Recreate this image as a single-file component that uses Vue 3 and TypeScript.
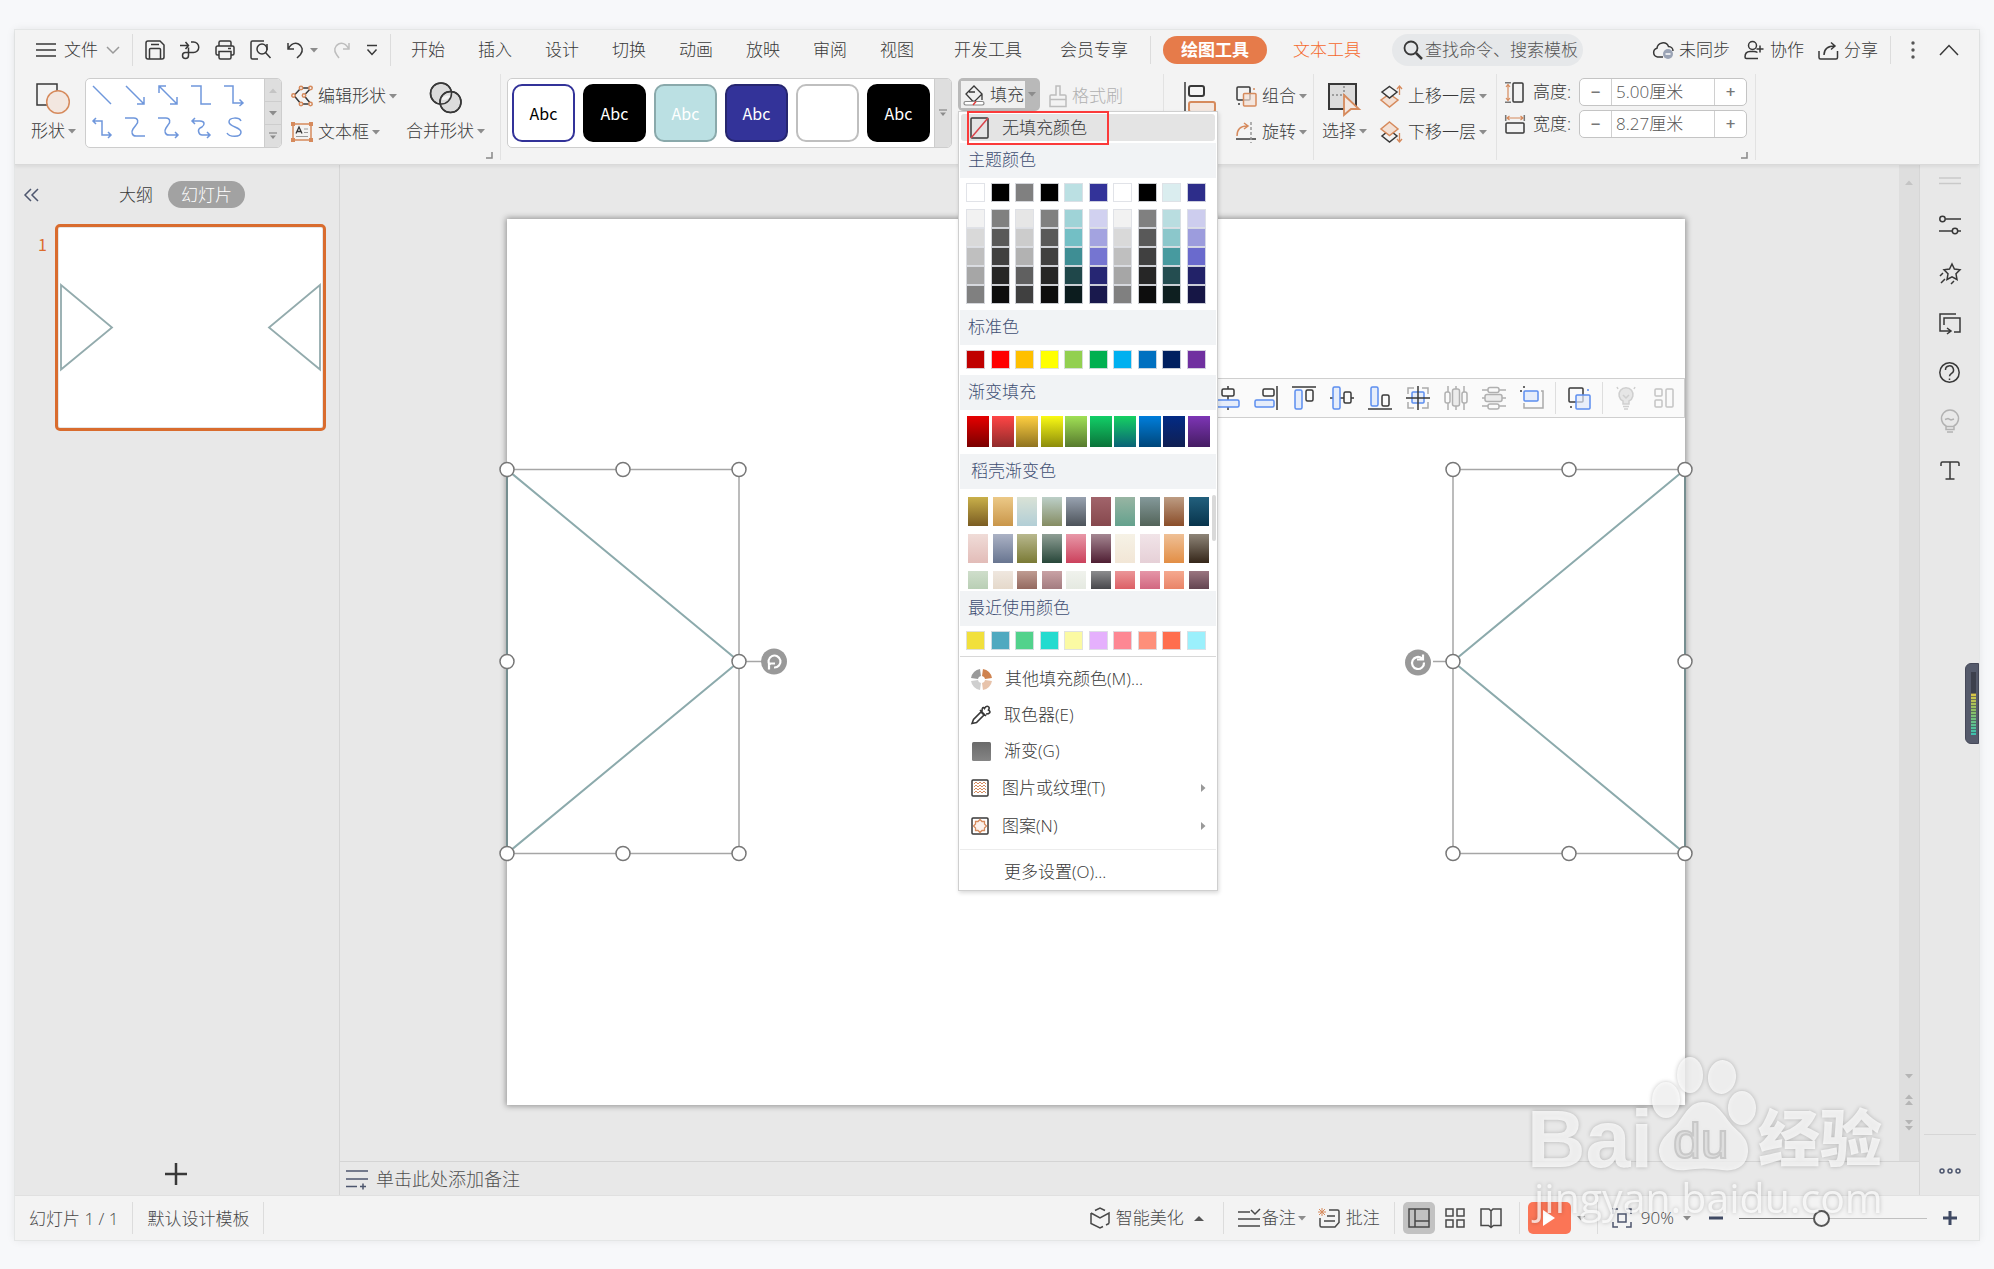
<script setup lang="ts">
import { h, ref } from 'vue'

type Icon = [number, number, string]

const O = '#d68a5c'
const B = '#5b8def'

const icons: Record<string, Icon> = {
  menu: [20, 14, '<path d="M0 1h20M0 7h20M0 13h20"/>'],
  chevron: [14, 8, '<path d="M1 1l6 6 6-6" stroke="#999"/>'],
  caret: [8, 5, '<path d="M0 0h8L4 4.5z" fill="#8c8c8c" stroke="none"/>'],
  caretUp: [10, 5, '<path d="M0 5h10L5 0z" fill="#555" stroke="none"/>'],
  caretLight: [8, 5, '<path d="M0 5h8L4 .5z" fill="#c4c4c4" stroke="none"/>'],
  caretMore: [8, 8, '<path d="M0 1h8" stroke="#999"/><path d="M1 3.500h6L4 7z" fill="#8c8c8c" stroke="none"/>'],
  save: [20, 20, '<path d="M1 3a2 2 0 0 1 2-2h12l4 4v12a2 2 0 0 1-2 2H3a2 2 0 0 1-2-2zM4.500 19V9.500a1 1 0 0 1 1-1h9a1 1 0 0 1 1 1V19M6 4.500h8"/>'],
  output: [20, 20, '<path d="M0 5.500h8M5.500 2l3 3.500-3 3.500M11 2h2.500a5 5 0 0 1 0 10.500H5.500a3 3 0 1 0 3 3V7.500"/>'],
  print: [20, 20, '<path d="M4 6V2.500A1.500 1.500 0 0 1 5.500 1h9A1.500 1.500 0 0 1 16 2.500V6M4 15H2.500A1.500 1.500 0 0 1 1 13.500v-6A1.500 1.500 0 0 1 2.500 6h15A1.500 1.500 0 0 1 19 7.500v6a1.500 1.500 0 0 1-1.500 1.500H16M4 11.500h12v6a1.500 1.500 0 0 1-1.500 1.500h-9A1.500 1.500 0 0 1 4 17.500zM13 8.500h3"/>'],
  preview: [21, 20, '<path d="M14 1H2.500A1.500 1.500 0 0 0 1 2.500v15A1.500 1.500 0 0 0 2.500 19H8"/><circle cx="12" cy="9" r="5"/><path d="M15.500 12.500L20.500 18M17 4v6"/>'],
  undo: [18, 18, '<path d="M2 2v6h6M2 8C5 3 9 1.500 12.500 3c4 2 5 7 2 10.500L11 17"/>'],
  redo: [18, 18, '<path d="M16 2v6h-6M16 8C13 3 9 1.500 5.500 3c-4 2-5 7-2 10.500L6 17" stroke="#bdbdbd"/>'],
  more: [12, 12, '<path d="M1 1.500h10M1.500 5.500L6 10.500l4.500-5"/>'],
  search: [20, 20, '<circle cx="8" cy="8" r="6.500" stroke-width="1.800"/><path d="M13 13l6 6" stroke-width="2.500"/>'],
  cloud: [22, 18, '<path d="M11 16H5.500A4.500 4.500 0 0 1 5 7.200 6 6 0 0 1 16.500 5.500a4.500 4.500 0 0 1 4.500 4.500"/><circle cx="16" cy="13" r="5" fill="#9aa3b5" stroke="none"/><path d="M13.500 13h5" stroke="#fff"/>'],
  people: [20, 20, '<circle cx="8.500" cy="5.500" r="4"/><path d="M14 18.500H2.500A1.500 1.500 0 0 1 1 17c0-4 2-5.500 5-5.500h4c1.500 0 2.500.3 3.500 1M12.500 9h7M16 5.500v7"/>'],
  share: [21, 19, '<path d="M1 10v6.500A1.500 1.500 0 0 0 2.500 18h15.500a1.500 1.500 0 0 0 1.500-1.500V10M6 14c0-6 4-9 11-9M13 1.500L17 5l-4 3.500"/>'],
  dots: [4, 18, '<g fill="#555" stroke="none"><circle cx="2" cy="2" r="1.700"/><circle cx="2" cy="9" r="1.700"/><circle cx="2" cy="16" r="1.700"/></g>'],
  up: [20, 12, '<path d="M1 11l9-9.500 9 9.500"/>'],
  shapes: [35, 32, `<path d="M1 2h20v21H1z"/><circle cx="22" cy="20" r="11.300" fill="#f3e7e0" stroke="${O}"/>`],
  merge: [32, 32, '<circle cx="11" cy="11.500" r="10.500" fill="#dcdcdc"/><circle cx="20.500" cy="20" r="10.500" fill="#dcdcdc"/><path d="M10.300 17.600A10.500 10.500 0 0 1 21.300 13.800A10.500 10.500 0 0 1 10.300 17.600z" fill="#f3f3f3" stroke="none"/><circle cx="11" cy="11.500" r="10.500"/><circle cx="20.500" cy="20" r="10.500"/>'],
  editShape: [22, 22, `<path d="M10 3h10l-7 7.500 7 8.500H10L3 10.500z"/><g fill="#f3f3f3" stroke="${O}"><circle cx="10" cy="3" r="1.700"/><circle cx="19.500" cy="3" r="1.700"/><circle cx="2.500" cy="10.500" r="1.700"/><circle cx="13" cy="10.500" r="1.700"/><circle cx="10" cy="19" r="1.700"/><circle cx="19.500" cy="19" r="1.700"/></g>`],
  textBox: [22, 20, `<path d="M2 2h18v16H2z" stroke="${O}"/><g fill="${O}" stroke="none"><path d="M0 0h4v4H0zM18 0h4v4h-4zM0 16h4v4H0zM18 16h4v4h-4z"/></g><path d="M5 11.500L8 5l3 6.500M6 9.500h4" stroke-width="1.300"/><path d="M13 7h4M13 10.500h4M5 14.500h12" stroke="#999" stroke-width="1"/>`],
  ln1: [20, 20, '<path d="M1 1l18 18"/>'],
  ln2: [20, 20, '<path d="M1 1l18 18M19 12v7h-7"/>'],
  ln3: [20, 20, '<path d="M1 1l18 18M19 12v7h-7M1 8V1h7"/>'],
  ln4: [20, 20, '<path d="M0 1h10v18h10"/>'],
  ln5: [20, 20, '<path d="M0 1h9v17h10M15.500 14.500l3.500 3.500-3.500 3"/>'],
  ln6: [20, 20, '<path d="M1 4h9v14h9M4 1L1 4l3 3M16 15l3 3-3 3"/>'],
  ln7: [20, 20, '<path d="M0 1h9c4 0 5 4 2 7l-3 4c-2 3-1 7 3 7h9"/>'],
  ln8: [22, 20, '<path d="M0 1h8c4 0 5 4 2 7l-2 3c-2 3-1 7 3 7h9M17 15l3 3-3 3"/>'],
  ln9: [20, 20, '<path d="M1 4h8c5 0 5 4 2 6l-2 1c-3 2-1 7 2 7h8M4 1L1 4l3 3M16 15l3 3-3 3"/>'],
  ln10: [20, 20, '<path d="M17 4c-2-4-12-4-12 1 0 5 12 5 12 10 0 6-12 5-14 1"/>'],
  bucket: [23, 22, '<path d="M3 10l8-8 8 8-7 7-2 .500zM6 8h6M19 10v6" stroke-width="1.300"/><rect x="1" y="17.500" width="20" height="3.500" rx="1.700" stroke="#888" fill="#fff" stroke-width="1.200"/><path d="M10 21l3-3.500" stroke="#e03c3c"/>'],
  brush: [18, 23, '<path d="M7 1h4v9h5a1 1 0 0 1 1 1v10.500H1V11a1 1 0 0 1 1-1h5zM1 14.500h16" stroke="#bdbdbd"/>'],
  alignL: [32, 30, `<path d="M1 0v30"/><rect x="5" y="4" width="15" height="10" rx="2" stroke-width="2"/><rect x="5" y="20" width="26" height="10" rx="2" fill="#f3e7e0" stroke="${O}" stroke-width="2"/>`],
  group: [21, 21, `<rect x="1" y="1" width="13" height="13" rx="1"/><rect x="7.500" y="7.500" width="12.500" height="12.500" rx="1" fill="#f3e0d4" stroke="${O}" fill-opacity=".7"/><path d="M17 3h2" stroke="${O}"/><path d="M2 18h2"/>`],
  rotate: [21, 21, `<path d="M1 14C1 8 4 4 11 4M8 1l4 3-4 3" stroke="${O}"/><path d="M0 17h20"/><path d="M15 0v21" stroke="#999" stroke-dasharray="3 2"/>`],
  select: [33, 34, `<rect x="1" y="2" width="27" height="25" fill="#dcdcdc" stroke-width="2"/><path d="M4 13h11M16 4v9" stroke="#888" stroke-dasharray="2 2"/><path d="M16 13l15 14h-8l-7 6z" fill="#f3e7e0" stroke="${O}" stroke-width="1.800"/>`],
  fwd: [23, 23, `<path d="M9.500 9l8.500 6-8.500 7L1 15z" fill="#f3e0d4" stroke="${O}"/><path d="M9.500 1.500L17 7l-7.500 6L2 7z" fill="#f3f3f3"/><path d="M19.500 10V1M17 4l2.500-3L22 4" stroke="${O}" stroke-width="1.300"/>`],
  back: [23, 23, `<path d="M9.500 9l7.500 6-7.500 6L2 15z"/><path d="M9.500 1l8.500 7-8.500 6.500L1 8z" fill="#f3e0d4" stroke="${O}"/><path d="M19.500 12v9M17 18l2.500 3 2.500-3" stroke="${O}" stroke-width="1.300"/>`],
  height: [20, 21, `<rect x="8" y="1" width="10" height="19" rx="1"/><path d="M0 .700h6M0 20.300h6" stroke="#777"/><path d="M3 2.500v16M1 5l2-2.500L5 5M1 16l2 2.500L5 16" stroke="${O}" stroke-width="1.200"/>`],
  width: [20, 20, `<rect x="1" y="9" width="18" height="10" rx="1"/><path d="M.7 1v6M19.300 1v6" stroke="#777"/><path d="M2 4h16M4.500 2L2 4l2.500 2M15.500 2L18 4l-2.500 2" stroke="${O}" stroke-width="1.200"/>`],
  launcher: [7, 7, '<path d="M6 0v6H0" stroke="#888"/>'],
  noFill: [20, 22, '<rect x="1" y="1" width="17" height="20" rx="1"/><path d="M1 21L18 1" stroke="#d9434a"/>'],
  wheel: [21, 21, '<g fill="none" stroke-width="7"><path d="M3.500 9.500A7 7 0 0 1 9.500 3.500" stroke="#9a9a9a"/><path d="M11.500 3.500a7 7 0 0 1 6 6" stroke="#cf8350"/><path d="M17.500 11.500a7 7 0 0 1-6 6" stroke="#e7c3ab"/><path d="M9.500 17.500a7 7 0 0 1-6-6" stroke="#cfcfcf"/></g>'],
  dropper: [20, 20, '<path d="M1 18.500l1.500-4L10 7l3 3-7.500 7.500zM9 5l6 6M11 6.500c0-4 1-5 2.500-3C15 0 20 1 17.500 5c3 2 1 4-2.500 4" stroke-width="1.600"/>'],
  gradient: [20, 20, '<defs><linearGradient id="gg" x1="0" y1="0" x2="0" y2="1"><stop offset="0" stop-color="#6a6a6a"/><stop offset="1" stop-color="#858585"/></linearGradient></defs><rect x="1" y="1" width="19" height="19" rx="1.500" fill="url(#gg)" stroke="none"/>'],
  texture: [18, 18, `<rect x="1" y="1" width="16" height="16" rx="1"/><path d="M3 5l2-2 2 2 2-2 2 2 2-2 2 2M3 8l2-2 2 2 2-2 2 2 2-2 2 2M3 11l2-2 2 2 2-2 2 2 2-2 2 2M3 14l2-2 2 2 2-2 2 2 2-2 2 2" stroke="${O}" stroke-width="1"/>`],
  pattern: [18, 18, `<rect x="1" y="1" width="16" height="16" rx="1"/><path d="M9 2.500l2 2h2.500V7l2 2-2 2v2.500H11l-2 2-2-2H4.500V11l-2-2 2-2V4.500H7z" stroke="${O}" fill="#fbf1ec" stroke-width="1.300"/>`],
  arrowR: [5, 8, '<path d="M0 0v8l4.500-4z" fill="#999" stroke="none"/>'],
  collapse: [15, 14, '<path d="M7 1L1 7l6 6M14 1L8 7l6 6" stroke="#4d566e"/>'],
  plus: [22, 22, '<path d="M11 0v22M0 11h22" stroke-width="2.500"/>'],
  notes: [22, 18, '<path d="M0 1h22M0 9h22M0 16.500h11M14 16.500h6M17 13.500v6" stroke="#4d566e"/>'],
  sliders: [22, 20, '<circle cx="3.500" cy="4" r="2.700"/><circle cx="16" cy="16" r="2.700"/><path d="M6.500 4H22M0 16h13M19 16h3"/>'],
  star: [22, 22, '<path d="M13 1l2.400 5 5.600.8-4 4 1 5.700-5-2.700-5 2.700 1-5.700-4-4L10.500 6zM1 13l3-3M2 20l4-4M12 21l3-3"/>'],
  frames: [22, 21, '<path d="M17 1H1v17h10M8 15l4 3-4 3M5 12V5h16v14h-6"/>'],
  help: [21, 21, '<circle cx="10.500" cy="10.500" r="9.700"/><path d="M6.500 8a4 4 0 1 1 6 3.300c-1.500 1-2 1.500-2 3M10.500 16.500v1.500"/>'],
  bulb: [20, 23, '<g stroke="#b2b2b2"><path d="M6 16a8.500 8.500 0 1 1 8 0v3.500H6zM5 9.500l3-1 3 1.500 3-1M6 16.500h8M7 22h6"/></g>'],
  tee: [20, 19, '<path d="M1 5V2.500A1.500 1.500 0 0 1 2.500 1h15A1.500 1.500 0 0 1 19 2.500V5M10 1v17M5.500 18h9"/>'],
  handle: [22, 8, '<path d="M0 1h22M0 6.500h22" stroke="#c9c9c9"/>'],
  ellipsis: [22, 6, '<g stroke="#4d566e"><circle cx="3" cy="3" r="2"/><circle cx="11" cy="3" r="2"/><circle cx="19" cy="3" r="2"/></g>'],
  box: [20, 22, '<path d="M1 6v10.500L10 21l3-1.500M1 6l9 5 9-5v10.500M5 3.500L10 1l5 2.500M19 16.500L16 18" />'],
  noteList: [22, 18, '<path d="M0 3h12M0 10h22M0 17h22M13 1l4 4 5-5"/>'],
  comment: [22, 20, `<path d="M11 2h8.500A1.500 1.500 0 0 1 21 3.500v11L17 19H3.500A1.500 1.500 0 0 1 2 17.500V10M9 8h8M6 13h11"/><path d="M4 0v8M0 4h8M1 1l6 6M7 1L1 7" stroke="${O}" stroke-width="1"/>`],
  normal: [22, 20, '<path d="M1 1h20v18H1zM7 1v18M7 13h14"/>'],
  grid4: [20, 20, '<rect x="1" y="1" width="7" height="7"/><rect x="12" y="1" width="7" height="7"/><rect x="1" y="12" width="7" height="7"/><rect x="12" y="12" width="7" height="7"/>'],
  book: [22, 20, '<path d="M11 19.500l-2.500-2H1V1h8l2 2 2-2h8v16.500h-7.500zM11 3v16"/>'],
  play: [14, 18, '<path d="M1 1v16l12-8z" fill="#fff" stroke="none"/>'],
  fit: [20, 20, '<path d="M1 6V1h5M14 1h5v5M19 14v5h-5M6 19H1v-5M6 6h8v8H6z" stroke="#4d566e"/>'],
  minusB: [14, 4, '<path d="M0 2h14" stroke="#3f4963" stroke-width="3"/>'],
  plusB: [14, 14, '<path d="M0 7h14M7 0v14" stroke="#3f4963" stroke-width="3"/>'],
  dblUp: [8, 11, '<path d="M0 5h8L4 .5zM0 11h8L4 6.500z" fill="#b5b5b5" stroke="none"/>'],
  dblDown: [8, 11, '<path d="M0 0h8L4 4.500zM0 6h8L4 10.500z" fill="#b5b5b5" stroke="none"/>'],
  down: [8, 5, '<path d="M0 0h8L4 4.500z" fill="#b5b5b5" stroke="none"/>'],
  aCenterH: [24, 24, `<path d="M12 0v24"/><rect x="6" y="3" width="12" height="7" rx="1.500" fill="#fafafa"/><rect x="1" y="14" width="22" height="7" rx="1.500" fill="#e6edfa" stroke="${B}"/>`],
  aRight: [24, 24, `<path d="M23 0v24"/><rect x="9" y="3" width="11" height="7" rx="1.500"/><rect x="1" y="14" width="19" height="7" rx="1.500" fill="#e6edfa" stroke="${B}"/>`],
  aTop: [24, 24, `<path d="M0 1h24"/><rect x="3" y="4" width="7" height="19" rx="1.500" fill="#e6edfa" stroke="${B}"/><rect x="14" y="4" width="7" height="11" rx="1.500"/>`],
  aMid: [24, 24, `<path d="M0 12h24"/><rect x="3" y="1" width="7" height="22" rx="1.500" fill="#e6edfa" stroke="${B}"/><rect x="14" y="6" width="7" height="11" rx="1.500" fill="#fafafa"/>`],
  aBottom: [24, 24, `<path d="M0 23h24"/><rect x="3" y="1" width="7" height="19" rx="1.500" fill="#e6edfa" stroke="${B}"/><rect x="14" y="9" width="7" height="11" rx="1.500"/>`],
  aCenter: [24, 24, `<path d="M2 8V2h6M16 2h6v6M22 16v6h-6M8 22H2v-6" stroke="#aaa"/><rect x="6" y="6" width="12" height="11" rx="1" fill="#e6edfa" stroke="${B}"/><path d="M12 0v24M0 12h24"/>`],
  distH: [24, 24, '<g stroke="#b0b0b0"><path d="M4 0v24M12 0v24M20 0v24"/><rect x="1" y="6" width="5" height="11" rx="2" fill="#fafafa"/><rect x="8.500" y="3" width="7" height="17" rx="2" fill="#ececec"/><rect x="18" y="6" width="5" height="11" rx="2" fill="#fafafa"/></g>'],
  distV: [24, 24, '<g stroke="#b0b0b0"><path d="M0 4h24M0 12h24M0 20h24"/><rect x="6" y="1.500" width="11" height="5" rx="2" fill="#fafafa"/><rect x="3" y="8.500" width="17" height="7" rx="2" fill="#ececec"/><rect x="6" y="18" width="11" height="5" rx="2" fill="#fafafa"/></g>'],
  canvas: [24, 24, `<path d="M21 5h2v17H4v-5" stroke="#aaa"/><rect x="4" y="5" width="14" height="10" rx="1" fill="#e6edfa" stroke="${B}"/><path d="M0 5h2M4 0v2"/>`],
  groupBlue: [24, 24, `<rect x="2" y="2" width="14" height="14" rx="1"/><rect x="9" y="9" width="14" height="14" rx="1" fill="#dfe8fa" stroke="${B}" fill-opacity=".7"/><path d="M3 21h2"/><path d="M20 4h2" stroke="${B}"/>`],
  lamp: [24, 24, '<g stroke="#cfcfcf"><path d="M9 18v-3a7 7 0 1 1 6 0v3z" fill="#e6e6e6"/><path d="M9 20.500h6M10 23h4M9 9l3 3 3-3M4 3L3 1M20 3l1-2"/></g>'],
  layout: [24, 24, '<g stroke="#c4c4c4"><rect x="3" y="3" width="7" height="7" rx="1"/><rect x="3" y="14" width="7" height="7" rx="1"/><rect x="14" y="3" width="7" height="18" rx="1"/></g>'],
}

const Ico = (props: { name: string }) => {
  const [w, ht, body] = icons[props.name]
  return h('svg', {
    class: 'ico', width: w, height: ht, viewBox: `0 0 ${w} ${ht}`, fill: 'none',
    stroke: 'currentColor', 'stroke-width': 1.5, 'aria-hidden': 'true', innerHTML: body,
  })
}
Ico.props = ['name']

const tabs = ['开始', '插入', '设计', '切换', '动画', '放映', '审阅', '视图']
const wideTabs = ['开发工具', '会员专享']
const lines = ['ln1', 'ln2', 'ln3', 'ln4', 'ln5', 'ln6', 'ln7', 'ln8', 'ln9', 'ln10']
const presets = [
  { bg: '#fff', line: '#333399', text: '#000', label: 'Abc' },
  { bg: '#000', line: '#000', text: '#fff', label: 'Abc' },
  { bg: '#bbe0e3', line: '#8aa9ab', text: '#fff', label: 'Abc' },
  { bg: '#333399', line: '#26266f', text: '#fff', label: 'Abc' },
  { bg: '#fff', line: '#bfbfbf', text: '#fff', label: '' },
  { bg: '#000', line: '#000', text: '#fff', label: 'Abc' },
]

const theme = ['#ffffff', '#000000', '#808080', '#000000', '#bbe0e3', '#333399', '#ffffff', '#000000', '#daedef', '#2d2d8a']
const tints = [
  ['#f2f2f2', '#808080', '#e6e6e6', '#808080', '#9fd3d7', '#d1d1f0', '#f2f2f2', '#808080', '#b9dde0', '#cdcdee'],
  ['#d9d9d9', '#595959', '#cccccc', '#595959', '#73bfc5', '#a3a3e0', '#d9d9d9', '#595959', '#8bc7cb', '#9c9cdd'],
  ['#bfbfbf', '#404040', '#b2b2b2', '#404040', '#3e8e94', '#7575d1', '#bfbfbf', '#404040', '#479a9f', '#6a6acd'],
  ['#a6a6a6', '#262626', '#606060', '#262626', '#1f474a', '#262673', '#a6a6a6', '#262626', '#244d50', '#222268'],
  ['#808080', '#0d0d0d', '#404040', '#0d0d0d', '#0c1c1e', '#19194d', '#808080', '#0d0d0d', '#0e1f20', '#161645'],
]
const standard = ['#c00000', '#ff0000', '#ffc000', '#ffff00', '#92d050', '#00b050', '#00b0f0', '#0070c0', '#002060', '#7030a0']
const gradients = [
  ['#e60000', '#7a0000'], ['#ff4545', '#8f2b2b'], ['#ffcf40', '#8f7320'], ['#fafa14', '#8c8c0c'], ['#a0e055', '#577a2e'],
  ['#12cf67', '#0a733a'], ['#16d162', '#0a6277'], ['#007edb', '#00467a'], ['#032b85', '#101f52'], ['#7d35b5', '#451c63'],
]
const docer = [
  [['#c9b04a', '#7a5c22'], ['#ecc987', '#c9964a'], ['#d9e2d6', '#b2ced6'], ['#bccfc8', '#858c62'], ['#98a2b0', '#4d535a'],
    ['#a1646b', '#86484d'], ['#98b5a3', '#64a18d'], ['#84999a', '#536459'], ['#bd9c83', '#8a4d29'], ['#22607d', '#08344c']],
  [['#f0dcd8', '#e2bcb8'], ['#abb2c5', '#687590'], ['#b8b88e', '#7a7a35'], ['#8f9f95', '#28473a'], ['#e898a8', '#cb415c'],
    ['#a58792', '#4f1e33'], ['#f6f2e6', '#f2e6d6'], ['#f1e4e8', '#e6d0d7'], ['#efc096', '#e28e45'], ['#8e8578', '#352619']],
  [['#cfdecb', '#b9cfb5'], ['#efe7df', '#e5d9cb'], ['#bf9c92', '#946a60'], ['#c9a2a5', '#a37c80'], ['#f0f2ed', '#e5e9e1'],
    ['#8c8c8e', '#48484c'], ['#eb9698', '#dc6066'], ['#e596a8', '#d26780'], ['#f5a98f', '#e98468'], ['#9a7580', '#634551']],
]
const recent = ['#f1e03c', '#50a9c0', '#52d28c', '#23dbcf', '#fbfaa3', '#e5b0fd', '#fd8793', '#fe8f7a', '#ff6e4e', '#9bf0fc']

const commands = [
  { icon: 'wheel', text: '其他填充颜色(M)...', sub: false },
  { icon: 'dropper', text: '取色器(E)', sub: false },
  { icon: 'gradient', text: '渐变(G)', sub: false },
  { icon: 'texture', text: '图片或纹理(T)', sub: true },
  { icon: 'pattern', text: '图案(N)', sub: true },
]
const floatA = ['aCenterH', 'aRight', 'aTop', 'aMid', 'aBottom', 'aCenter', 'distH', 'distV', 'canvas']
const side = ['sliders', 'star', 'frames', 'help', 'bulb', 'tee']

const grad = (c: string[]) => ({ backgroundImage: `linear-gradient(${c[0]}, ${c[1]})` })
const handlesLeft = [[0, 250], [116, 250], [232, 250], [0, 442], [232, 442], [0, 634], [116, 634], [232, 634]]
const handlesRight = handlesLeft.map(([x, y]) => [x + 946, y])

const shapeHeight = ref('5.00厘米')
const shapeWidth = ref('8.27厘米')
const zoom = ref(43)
</script>

<template>
  <div class="desktop">
    <div class="app">
      <header class="top">
        <div class="menubar">
          <button class="btn file"><Ico name="menu" />文件<Ico name="chevron" /></button>
          <i class="sep" />
          <div class="quick">
            <button class="btn" aria-label="保存"><Ico name="save" /></button>
            <button class="btn" aria-label="输出"><Ico name="output" /></button>
            <button class="btn" aria-label="打印"><Ico name="print" /></button>
            <button class="btn" aria-label="预览"><Ico name="preview" /></button>
            <button class="btn g6" aria-label="撤销"><Ico name="undo" /><Ico name="caret" /></button>
            <button class="btn" aria-label="恢复"><Ico name="redo" /></button>
            <button class="btn" aria-label="更多"><Ico name="more" /></button>
          </div>
          <i class="sep" />
          <nav class="tabs">
            <button v-for="t in tabs" :key="t" class="btn">{{ t }}</button>
          </nav>
          <nav class="tabs wide">
            <button v-for="t in wideTabs" :key="t" class="btn">{{ t }}</button>
          </nav>
          <i class="sep short" />
          <button class="btn pill">绘图工具</button>
          <button class="btn text-tool">文本工具</button>
          <label class="search"><Ico name="search" /><input type="text" placeholder="查找命令、搜索模板" aria-label="搜索"></label>
          <div class="account">
            <button class="btn g5"><Ico name="cloud" />未同步</button>
            <button class="btn g6"><Ico name="people" />协作</button>
            <button class="btn g5"><Ico name="share" />分享</button>
          </div>
          <i class="sep short" />
          <div class="winctl">
            <button class="btn" aria-label="选项"><Ico name="dots" /></button>
            <button class="btn" aria-label="折叠"><Ico name="up" /></button>
          </div>
        </div>

        <div class="ribbon">
          <div class="rgroup shape-group">
            <button class="btn big"><Ico name="shapes" /><span class="lbl">形状<Ico name="caret" /></span></button>
            <div class="gallery">
              <div class="line-grid">
                <button v-for="l in lines" :key="l" class="btn line" :aria-label="l"><Ico :name="l" /></button>
              </div>
              <div class="gallery-nav">
                <button class="btn" aria-label="上"><Ico name="caretLight" /></button>
                <button class="btn" aria-label="下"><Ico name="caret" /></button>
                <button class="btn" aria-label="全部"><Ico name="caretMore" /></button>
              </div>
            </div>
            <div class="rows">
              <button class="btn row"><Ico name="editShape" /><span class="lbl">编辑形状<Ico name="caret" /></span></button>
              <button class="btn row"><Ico name="textBox" /><span class="lbl">文本框<Ico name="caret" /></span></button>
            </div>
            <button class="btn big"><Ico name="merge" /><span class="lbl">合并形状<Ico name="caret" /></span></button>
            <Ico name="launcher" class="launcher" />
          </div>
          <i class="rsep" />
          <div class="rgroup style-group">
            <div class="gallery">
              <div class="presets">
                <button v-for="(p, i) in presets" :key="i" class="btn preset" :style="{ background: p.bg, borderColor: p.line, color: p.text }">{{ p.label }}</button>
              </div>
              <div class="gallery-nav"><button class="btn" aria-label="全部样式"><Ico name="caretMore" /></button></div>
            </div>
            <button class="btn fill-btn"><span class="fill-main"><Ico name="bucket" />填充</span><Ico name="caret" /></button>
            <button class="btn row brush"><Ico name="brush" />格式刷</button>
          </div>
          <i class="rsep" />
          <div class="rgroup arrange">
            <button class="btn big" aria-label="对齐"><Ico name="alignL" /></button>
            <div class="rows">
              <button class="btn row"><Ico name="group" /><span class="lbl">组合<Ico name="caret" /></span></button>
              <button class="btn row"><Ico name="rotate" /><span class="lbl">旋转<Ico name="caret" /></span></button>
            </div>
          </div>
          <i class="rsep" />
          <div class="rgroup layers">
            <button class="btn big"><Ico name="select" /><span class="lbl">选择<Ico name="caret" /></span></button>
            <div class="rows">
              <button class="btn row"><Ico name="fwd" /><span class="lbl">上移一层<Ico name="caret" /></span></button>
              <button class="btn row"><Ico name="back" /><span class="lbl">下移一层<Ico name="caret" /></span></button>
            </div>
          </div>
          <i class="rsep" />
          <div class="rgroup sizes">
            <div class="size-rows">
              <div class="size"><Ico name="height" /><label for="sh">高度:</label>
                <div class="spin"><button class="btn">−</button><input id="sh" v-model="shapeHeight" type="text"><button class="btn">+</button></div>
              </div>
              <div class="size"><Ico name="width" /><label for="sw">宽度:</label>
                <div class="spin"><button class="btn">−</button><input id="sw" v-model="shapeWidth" type="text"><button class="btn">+</button></div>
              </div>
            </div>
            <Ico name="launcher" class="launcher" />
          </div>
          <i class="rsep" />
        </div>
      </header>

      <div class="fill-menu" role="menu">
        <button class="btn no-fill" role="menuitem"><Ico name="noFill" />无填充颜色</button>
        <h4>主题颜色</h4>
        <div class="sw first"><button v-for="(c, i) in theme" :key="i" class="btn chip" :aria-label="c" :style="{ background: c }" /></div>
        <div class="tints">
          <div v-for="(r, k) in tints" :key="k" class="sw"><button v-for="(c, i) in r" :key="i" class="btn chip" :aria-label="c" :style="{ background: c }" /></div>
        </div>
        <h4>标准色</h4>
        <div class="sw pad"><button v-for="c in standard" :key="c" class="btn chip" :aria-label="c" :style="{ background: c }" /></div>
        <h4>渐变填充</h4>
        <div class="gr"><button v-for="(c, i) in gradients" :key="i" class="btn gchip" :aria-label="c[0]" :style="grad(c)" /></div>
        <h4 class="docer-title">稻壳渐变色</h4>
        <div class="docer">
          <div v-for="(r, k) in docer" :key="k" class="drow"><button v-for="(c, i) in r" :key="i" class="btn dchip" :aria-label="c[0]" :style="grad(c)" /></div>
          <i class="thumb" />
        </div>
        <h4>最近使用颜色</h4>
        <div class="sw pad"><button v-for="c in recent" :key="c" class="btn chip" :aria-label="c" :style="{ background: c }" /></div>
        <div class="cmds">
          <button v-for="c in commands" :key="c.text" class="btn cmd" :class="{ sub: c.sub }" role="menuitem">
            <Ico :name="c.icon" />{{ c.text }}<Ico v-if="c.sub" name="arrowR" class="arr" />
          </button>
        </div>
        <button class="btn more-set" role="menuitem">更多设置(O)...</button>
      </div>

      <div class="body">
        <aside class="left">
          <div class="left-head">
            <button class="btn" aria-label="收起"><Ico name="collapse" /></button>
            <button class="btn outline-tab">大纲</button>
            <button class="btn slides-tab">幻灯片</button>
          </div>
          <div class="thumb-row">
            <span class="num">1</span>
            <div class="slide-thumb">
              <svg viewBox="0 0 261 197" fill="none" stroke="#93abad" stroke-width="1.800">
                <path d="M1 56L52 98.500 1 140.500zM260 56L209 98.500l51 42z" />
              </svg>
            </div>
          </div>
          <button class="btn add" aria-label="新建幻灯片"><Ico name="plus" /></button>
        </aside>

        <main class="center">
          <div class="work">
            <div class="stage">
              <div class="slide">
                <div class="float-bar">
                  <button v-for="f in floatA" :key="f" class="btn" :aria-label="f"><Ico :name="f" /></button>
                  <i class="fsep" />
                  <button class="btn" aria-label="组合"><Ico name="groupBlue" /></button>
                  <i class="fsep" />
                  <button class="btn" aria-label="智能"><Ico name="lamp" /></button>
                  <button class="btn" aria-label="版式"><Ico name="layout" /></button>
                </div>
                <svg class="shapes" viewBox="0 0 1178 885" fill="none">
                  <g stroke="#a6a6a6" stroke-width="1.500">
                    <path d="M0 250h232v384H0zM232 442h26" />
                    <path d="M946 250h232v384H946zM946 442h-20" />
                  </g>
                  <g stroke="#8caaac" stroke-width="2">
                    <path d="M0 250L232 442 0 634z" />
                    <path d="M1178 250L946 442l232 192z" />
                  </g>
                  <path d="M0 250v384M1178 250v384" stroke="#6f8587" stroke-width="1.500" />
                  <g fill="#fff" stroke="#777" stroke-width="1.500">
                    <circle v-for="([x, y], i) in handlesLeft.concat(handlesRight)" :key="i" :cx="x" :cy="y" r="7" />
                  </g>
                  <g fill="#999"><circle cx="267" cy="442" r="13" /><circle cx="911" cy="443" r="13" /></g>
                  <g stroke="#fff" stroke-width="2.200">
                    <path d="M263 446a6 6 0 1 1 4 2M262 450v-6h6" />
                    <path d="M915 439a6 6 0 1 0 2 4M916 435v5h-6" />
                  </g>
                </svg>
              </div>
            </div>
            <div class="vscroll">
              <Ico name="caretLight" />
              <div class="vs-bottom"><Ico name="down" /><Ico name="dblUp" /><Ico name="dblDown" /></div>
            </div>
          </div>
          <label class="notes"><Ico name="notes" /><input type="text" placeholder="单击此处添加备注" aria-label="备注"></label>
        </main>

        <aside class="right">
          <Ico name="handle" />
          <div class="side-icons">
            <button v-for="s in side" :key="s" class="btn" :aria-label="s"><Ico :name="s" /></button>
          </div>
          <div class="meter"><i class="bars" /></div>
          <div class="side-more"><button class="btn" aria-label="更多"><Ico name="ellipsis" /></button></div>
        </aside>
      </div>

      <footer class="status">
        <span class="st-text">幻灯片 1 / 1</span>
        <i class="sep" />
        <span class="st-text">默认设计模板</span>
        <i class="sep" />
        <div class="st-right">
          <button class="btn beauty"><Ico name="box" />智能美化<Ico name="caretUp" /></button>
          <i class="sep" />
          <div class="st-notes">
            <button class="btn g2"><Ico name="noteList" />备注<Ico name="caret" /></button>
            <button class="btn g6"><Ico name="comment" />批注</button>
          </div>
          <i class="sep" />
          <div class="views">
            <button class="btn view on" aria-label="普通视图"><Ico name="normal" /></button>
            <button class="btn view" aria-label="浏览"><Ico name="grid4" /></button>
            <button class="btn view" aria-label="阅读"><Ico name="book" /></button>
          </div>
          <i class="sep" />
          <div class="play-box"><button class="btn playbtn" aria-label="放映"><Ico name="play" /></button><Ico name="caret" /></div>
          <i class="sep" />
          <button class="btn zoom-btn"><Ico name="fit" />90%<Ico name="caret" /></button>
          <div class="zoom">
            <button class="btn" aria-label="缩小"><Ico name="minusB" /></button>
            <input v-model="zoom" type="range" min="0" max="100" aria-label="缩放">
            <button class="btn" aria-label="放大"><Ico name="plusB" /></button>
          </div>
        </div>
      </footer>
    </div>

    <div class="watermark" aria-hidden="true">
      <svg viewBox="0 0 370 190" width="370" height="190">
        <g fill="#fff" fill-opacity=".75">
          <text x="-3" y="127" class="wm-bold" font-size="81">Bai</text>
          <ellipse cx="136" cy="60" rx="14" ry="18" />
          <ellipse cx="160" cy="35" rx="13" ry="18" />
          <ellipse cx="192" cy="37" rx="14" ry="17" transform="rotate(8 192 37)" />
          <ellipse cx="212" cy="68" rx="14" ry="17" />
          <path d="M173 62c14 0 20 12 28 22 8 9 18 14 17 28-1 14-12 20-26 18-12-2-24-2-36 0-14 2-26-5-27-18 0-14 12-20 19-29 7-9 12-21 25-21z" />
          <text x="228" y="122" class="wm-cn" font-size="62">经验</text>
          <text x="4" y="173" class="wm-url" font-size="41">jingyan.baidu.com</text>
        </g>
        <text x="143" y="118" class="wm-du" font-size="50">du</text>
      </svg>
    </div>
  </div>
</template>

<style>
html, body { margin: 0; background: #f7f8fa; }
</style>

<style scoped>
* { box-sizing: border-box; }
.desktop {
  position: relative; height: 100vh; min-height: 900px; padding: 30px 15px 29px; display: flex; background: #f7f8fa;
  font-family: "Open Sans", "Noto Sans CJK SC", sans-serif; font-size: 17px; line-height: 24px; font-weight: 300; color: #383838;
}
.app { position: relative; flex: 1; min-width: 0; display: flex; flex-direction: column; background: #e8e8e8; box-shadow: 0 0 0 1px #e4e6e6, 0 0 9px rgba(0, 0, 0, .09); }
.btn { border: 0; margin: 0; padding: 0; background: none; font: inherit; color: inherit; display: flex; align-items: center; white-space: nowrap; flex: none; }
.ico { flex: none; display: block; overflow: visible; }
input { font: inherit; color: inherit; border: 0; background: none; padding: 0; outline: none; min-width: 0; }
.g6 { gap: 6px; }
.g5 { gap: 5px; }
.g2 { gap: 2px; }
.sep { width: 1px; height: 32px; background: #dcdcdc; flex: none; }
.sep.short { height: 28px; }

.top { background: #f3f3f3; border-bottom: 1px solid #d9d9d9; box-shadow: 0 2px 3px rgba(0, 0, 0, .06); z-index: 2; }
.menubar { height: 40px; display: flex; align-items: center; padding: 0 20px 0 21px; }
.file { gap: 8px; margin-right: 12px; }
.quick { display: flex; align-items: center; gap: 15px; padding: 0 12px; }
.tabs { display: flex; gap: 33px; padding-left: 20px; }
.tabs.wide { gap: 38px; padding: 0 22px 0 40px; }
.pill { margin-left: 12px; width: 104px; height: 28px; border-radius: 14px; justify-content: center; background: #e67b4a; color: #fff; font-weight: 700; }
.text-tool { margin: 0 31px 0 26px; color: #f5692c; }
.search { display: flex; align-items: center; width: 191px; height: 32px; border-radius: 16px; background: #e6e8ea; padding-left: 11px; gap: 2px; }
.search input { flex: 1; }
.search input::placeholder { color: #555; opacity: 1; }
.account { margin-left: auto; display: flex; gap: 14px; padding-right: 12px; }
.winctl { display: flex; gap: 24px; padding-left: 20px; }

.ribbon { display: flex; height: 94px; padding: 8px 0 0 16px; }
.rgroup { position: relative; display: flex; height: 83px; }
.rsep { width: 1px; height: 86px; background: #e2e2e2; margin-top: -4px; flex: none; }
.lbl { display: flex; align-items: center; gap: 3px; }
.big { flex-direction: column; height: 65px; padding-top: 4px; justify-content: space-between; align-items: center; }
.rows { display: flex; flex-direction: column; height: 72px; }
.row { height: 36px; gap: 5px; }
.shape-group { gap: 9px; padding-right: 15px; }
.gallery { display: flex; height: 70px; border: 1px solid #cdcdcd; border-radius: 5px; background: #fff; overflow: hidden; }
.line-grid { display: grid; grid-template-columns: repeat(5, 33px); grid-template-rows: 32px 32px; padding: 0 6px; width: 178px; color: #6f97dc; }
.line { align-self: center; }
.gallery-nav { width: 17px; background: #dedede; border-left: 1px solid #cdcdcd; display: flex; flex-direction: column; }
.gallery-nav .btn { flex: 1; justify-content: center; width: 100%; border-bottom: 1px solid #cdcdcd; }
.gallery-nav .btn:last-child { border-bottom: 0; }
.launcher { position: absolute; right: 7px; bottom: 2px; }
.style-group { padding: 0 40px 0 6px; gap: 6px; }
.presets { display: flex; gap: 8px; padding: 5px 4px; }
.preset { width: 63px; height: 58px; border: 2px solid; border-radius: 10px; justify-content: center; font-family: "Noto Sans CJK SC", sans-serif; font-size: 16px; font-weight: 400; }
.fill-btn { width: 82px; height: 33px; border-radius: 5px; background: #b9b9b9; padding: 3px; gap: 3px; }
.fill-main { display: flex; align-items: center; gap: 4px; height: 27px; width: 64px; background: #f0f0f0; padding-left: 2px; }
.brush { color: #b0b0b0; padding-left: 3px; }
.arrange { padding: 0 6px 0 20px; gap: 20px; }
.layers { padding: 0 9px 0 8px; gap: 13px; }
.sizes { padding: 0 8px; }
.size-rows { display: flex; flex-direction: column; gap: 4px; }
.size { display: flex; align-items: center; height: 28px; gap: 8px; }
.spin { display: flex; width: 168px; height: 28px; border: 1px solid #c4c4c4; border-radius: 5px; background: #fff; }
.spin .btn { width: 31px; justify-content: center; font-weight: 600; color: #777; }
.spin input { flex: 1; padding-left: 4px; border: solid #d0d0d0; border-width: 0 1px; color: #555; }

.fill-menu { position: absolute; left: 943px; top: 81px; width: 260px; z-index: 5; background: #fff; border: 1px solid #cfcfcf; box-shadow: 1px 2px 4px rgba(0, 0, 0, .15); padding: 0 1px; display: flex; flex-direction: column; }
.no-fill { position: relative; height: 27px; margin: 2px 1px 2px; padding-left: 9px; gap: 12px; background: #e4e4e4; border-radius: 3px; }
.no-fill::after { content: ""; position: absolute; left: 6px; top: -3px; width: 138px; height: 30px; border: 2px solid #fb3a3a; }
h4 { margin: 0; height: 35px; line-height: 34px; padding-left: 8px; background: #f1f3f5; color: #3f4f73; font-weight: 300; font-size: 17px; }
.sw { display: flex; justify-content: space-between; width: 240px; margin-left: 6px; }
.sw.first { margin-top: 5px; }
.tints { padding: 7px 0 6px; }
.sw.pad { margin-top: 5px; margin-bottom: 6px; }
.chip { width: 19px; height: 19px; border: 1px solid rgba(222, 224, 230, .9); }
.gr { display: flex; justify-content: space-between; width: 243px; margin: 6px 0 7px 7px; }
.gchip { width: 22px; height: 31px; }
.docer-title { padding-left: 11px; }
.docer { position: relative; height: 102px; overflow: hidden; padding: 8px 0 0 8px; display: flex; flex-direction: column; gap: 8px; }
.drow { display: flex; justify-content: space-between; width: 241px; }
.dchip { width: 20px; height: 29px; }
.drow:last-of-type .dchip { height: 18px; }
.thumb { position: absolute; right: 0; top: 6px; width: 4px; height: 46px; background: #d9d9d9; border-radius: 2px; }
.cmds { border-top: 1px solid #d8d8d8; border-bottom: 1px solid #ececec; padding: 4px 0; display: flex; flex-direction: column; }
.cmd { height: 36px; padding: 0 10px 0 11px; gap: 13px; }
.cmd.sub { height: 38px; }
.arr { margin-left: auto; }
.more-set { height: 40px; padding-left: 44px; padding-top: 4px; }

.body { flex: 1; min-height: 0; display: flex; }
.left { width: 325px; border-right: 1px solid #d6d6d6; display: flex; flex-direction: column; padding: 16px 12px 10px 9px; }
.left-head { display: flex; align-items: center; height: 27px; }
.outline-tab { margin: 0 15px 0 80px; }
.slides-tab { width: 77px; height: 27px; border-radius: 14px; background: #a2a2a2; color: #fff; justify-content: center; }
.thumb-row { display: flex; margin-top: 16px; padding-left: 14px; flex: 1; }
.num { width: 17px; padding-top: 8px; color: #dc6b2c; font-family: "Noto Sans CJK SC", sans-serif; font-size: 16px; font-weight: 400; }
.slide-thumb { width: 271px; height: 207px; border: 3px solid #d96c2e; border-radius: 5px; background: #fff; padding: 2px; box-shadow: inset 0 0 0 1px #e6e6e6; }
.slide-thumb svg { display: block; width: 100%; height: 100%; }
.add { align-self: center; }
.center { flex: 1; min-width: 0; display: flex; flex-direction: column; }
.work { flex: 1; min-height: 0; display: flex; }
.stage { flex: 1; min-width: 0; padding: 54px 214px 56px 167px; }
.slide { position: relative; background: #fff; width: 100%; height: 100%; box-shadow: 0 0 6px 1px rgba(0, 0, 0, .38); }
.shapes { position: absolute; inset: 0; width: 100%; height: 100%; overflow: visible; }
.float-bar { position: absolute; right: 0; top: 159px; height: 40px; display: flex; align-items: center; gap: 14px; padding: 0 8px 0 20px; background: #fafafa; border: 1px solid #cfcfcf; }
.fsep { width: 1px; height: 32px; background: #dedede; margin: 0 -3px; }
.vscroll { width: 20px; background: #dedede; display: flex; flex-direction: column; align-items: center; justify-content: space-between; padding: 15px 0 30px; }
.vs-bottom { display: flex; flex-direction: column; gap: 15px; }
.notes { height: 34px; border-top: 1px solid #d4d4d4; display: flex; align-items: center; padding-left: 6px; gap: 8px; font-size: 18px; }
.notes input { flex: 1; }
.notes input::placeholder { color: #505050; opacity: 1; }
.right { position: relative; width: 60px; border-left: 1px solid #d6d6d6; display: flex; flex-direction: column; align-items: center; padding-top: 12px; }
.side-icons { display: flex; flex-direction: column; gap: 27px; margin-top: 29px; }
.side-icons .btn { height: 22px; width: 24px; justify-content: center; }
.meter { position: absolute; right: 0; top: 498px; width: 14px; height: 81px; background: #555a6b; border-radius: 6px 0 0 6px; border: 1px solid #454858; display: flex; padding: 8px 2px 8px 5px; }
.bars { flex: 1; background: repeating-linear-gradient(rgba(60, 64, 78, .6) 0 1px, transparent 1px 3px), linear-gradient(#3d404c 0 34%, #e0c646 34%, #8fbf62 60%, #3cc0b0 100%); }
.side-more { margin-top: auto; width: 52px; height: 61px; border-top: 1px solid #d6d6d6; display: flex; justify-content: center; align-items: center; padding-top: 12px; }

.status { height: 45px; background: #f3f3f3; border-top: 1px solid #e0e0e0; display: flex; align-items: center; padding: 0 22px 0 0; color: #484848; }
.st-text { padding: 2px 14px 0; }
.st-right { margin-left: auto; display: flex; align-items: center; }
.beauty { gap: 6px; padding-right: 19px; }
.beauty .ico:last-child { margin-left: 4px; }
.st-notes { display: flex; gap: 12px; padding: 0 14px; }
.views { display: flex; gap: 4px; padding: 0 12px 0 8px; }
.view { width: 32px; height: 32px; border-radius: 5px; justify-content: center; }
.view.on { background: #c2c2c2; }
.play-box { display: flex; align-items: center; gap: 6px; padding: 0 12px 0 8px; }
.playbtn { width: 43px; height: 32px; border-radius: 5px; background: #fb7556; justify-content: center; }
.zoom-btn { gap: 9px; padding: 0 18px 0 14px; }
.zoom { display: flex; align-items: center; gap: 16px; }
.zoom input { appearance: none; width: 188px; height: 18px; margin: 0; background: linear-gradient(90deg, #777 43%, #c0c0c0 43%) center / 100% 1px no-repeat; }
.zoom input::-webkit-slider-thumb { appearance: none; box-sizing: border-box; width: 17px; height: 17px; border-radius: 50%; border: 2px solid #555; background: #f3f3f3; }

.watermark { position: absolute; right: 94px; bottom: 39px; z-index: 9; pointer-events: none; filter: drop-shadow(0 0 2px rgba(0, 0, 0, .3)); }
.watermark svg { display: block; overflow: visible; }
.wm-bold { font-family: "Liberation Sans", sans-serif; font-weight: 700; }
.wm-cn { font-family: "Noto Sans CJK SC", sans-serif; font-weight: 900; }
.wm-url { font-family: "Open Sans", sans-serif; font-weight: 400; }
.wm-du { font-family: "Liberation Sans", sans-serif; font-weight: 400; fill: #dedede; stroke: #c8c8c8; stroke-width: 2px; }
</style>
